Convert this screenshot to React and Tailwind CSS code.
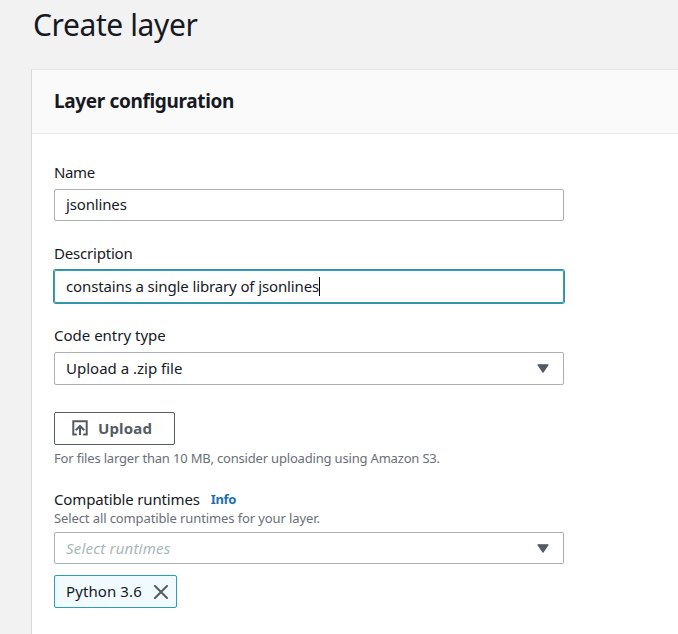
function Caret() {
  return (
    <svg width="12" height="9" viewBox="0 0 12 9" fill="#545b64" stroke="#545b64" strokeWidth="1.2" strokeLinejoin="round">
      <path d="M1 .8h10L6 8.2z" />
    </svg>
  );
}

function UploadIcon() {
  return (
    <svg className="-mt-px" width="16" height="16" viewBox="0 0 16 16" fill="none" stroke="#545b64" strokeWidth="2">
      <path d="M4.8 14.5H1.3V1.3h13.4v13.2H11.2" />
      <path d="M8 15V6.4M3.7 10.2L8 6l4.3 4.2" />
    </svg>
  );
}

function Label({ children }) {
  return <label className="block h-5 text-[15px] leading-5 whitespace-nowrap">{children}</label>;
}

export default function App() {
  return (
    <div className="flex h-[634px] w-[678px] flex-col overflow-hidden bg-[#f2f2f2] pl-[31px] font-['Noto_Sans','Open_Sans',sans-serif] text-[#16191f]">
      <h1 className="h-[69px] shrink-0 pt-[5px] pl-0.5 text-[30px] leading-10 whitespace-nowrap">
        <span className="tracking-[-0.4px]">Create layer</span>
      </h1>
      <section className="flex grow flex-col border-t border-l border-t-[#e6e6e6] border-l-[#d5d8d8] bg-white">
        <header className="flex h-16 shrink-0 items-center border-b border-[#eaeaea] bg-[#fafafa] pb-px pl-[22px]">
          <h2 className="text-[19px] leading-6 font-bold whitespace-nowrap"><span className="tracking-[-0.35px]">Layer configuration</span></h2>
        </header>
        <div className="flex flex-col pt-7 pl-[22px] text-[15px]">
          <Label><span className="tracking-[-0.4px]">Name</span></Label>
          <div className="mt-[7px] flex h-8 w-[510px] items-center rounded-xs border border-[#aab0b3] pb-px pl-[11px]">
            <span className="tracking-[-0.15px]">jsonlines</span>
          </div>
          <div className="mt-[22px]"><Label><span className="tracking-[-0.2px]">Description</span></Label></div>
          <div className="mt-[7px] flex h-[33px] w-[510px] items-center rounded-xs border border-[#2d9fb5] pl-[11px] ring-1 ring-[#3b8fa3]">
            <span className="tracking-[-0.13px]">constains a single library of jsonlines</span>
            <i className="h-[19px] w-px bg-black" />
          </div>
          <div className="mt-[22px]"><Label><span>Code entry type</span></Label></div>
          <div className="mt-[7px] flex h-[33px] w-[510px] items-center justify-between rounded-xs border border-[#aab0b3] pr-[14px] pl-[11px]">
            <span>Upload a .zip file</span>
            <Caret />
          </div>
          <button className="mt-[27px] flex h-[33px] w-[121px] items-center rounded-xs border border-[#545b64] pl-[17px] font-bold text-[#545b64]">
            <UploadIcon />
            <span className="ml-[10px] tracking-[0.15px]">Upload</span>
          </button>
          <p className="mt-[3px] h-5 text-[13px] leading-5 whitespace-nowrap text-[#687078]"><span className="tracking-[-0.18px]">For files larger than 10 MB, consider uploading using Amazon S3.</span></p>
          <div className="mt-[21px] flex items-center">
            <Label><span className="tracking-[-0.15px]">Compatible runtimes</span></Label>
            <a className="ml-[11px] pt-px text-[13px] leading-[19px] font-bold text-[#1a6fb0]"><span className="tracking-[-0.4px]">Info</span></a>
          </div>
          <p className="h-[18px] text-[13px] leading-[18px] whitespace-nowrap text-[#687078]"><span className="tracking-[-0.11px]">Select all compatible runtimes for your layer.</span></p>
          <div className="mt-[5px] flex h-8 w-[510px] items-center justify-between rounded-xs border border-[#aab0b3] pr-[14px] pl-[11px]">
            <span className="tracking-[0.2px] text-[#aab7b8] italic">Select runtimes</span>
            <Caret />
          </div>
          <div className="mt-[11px] flex h-[33px] w-[123px] items-center justify-between rounded-xs border border-[#2d9fb5] bg-[#f1faff] pr-2 pl-[11px]">
            <span className="tracking-[0.1px]">Python 3.6</span>
            <svg width="14" height="14" viewBox="0 0 14 14" stroke="#545b64" strokeWidth="2" strokeLinecap="round">
              <path d="M1 1l12 12M13 1L1 13" />
            </svg>
          </div>
        </div>
      </section>
    </div>
  );
}
